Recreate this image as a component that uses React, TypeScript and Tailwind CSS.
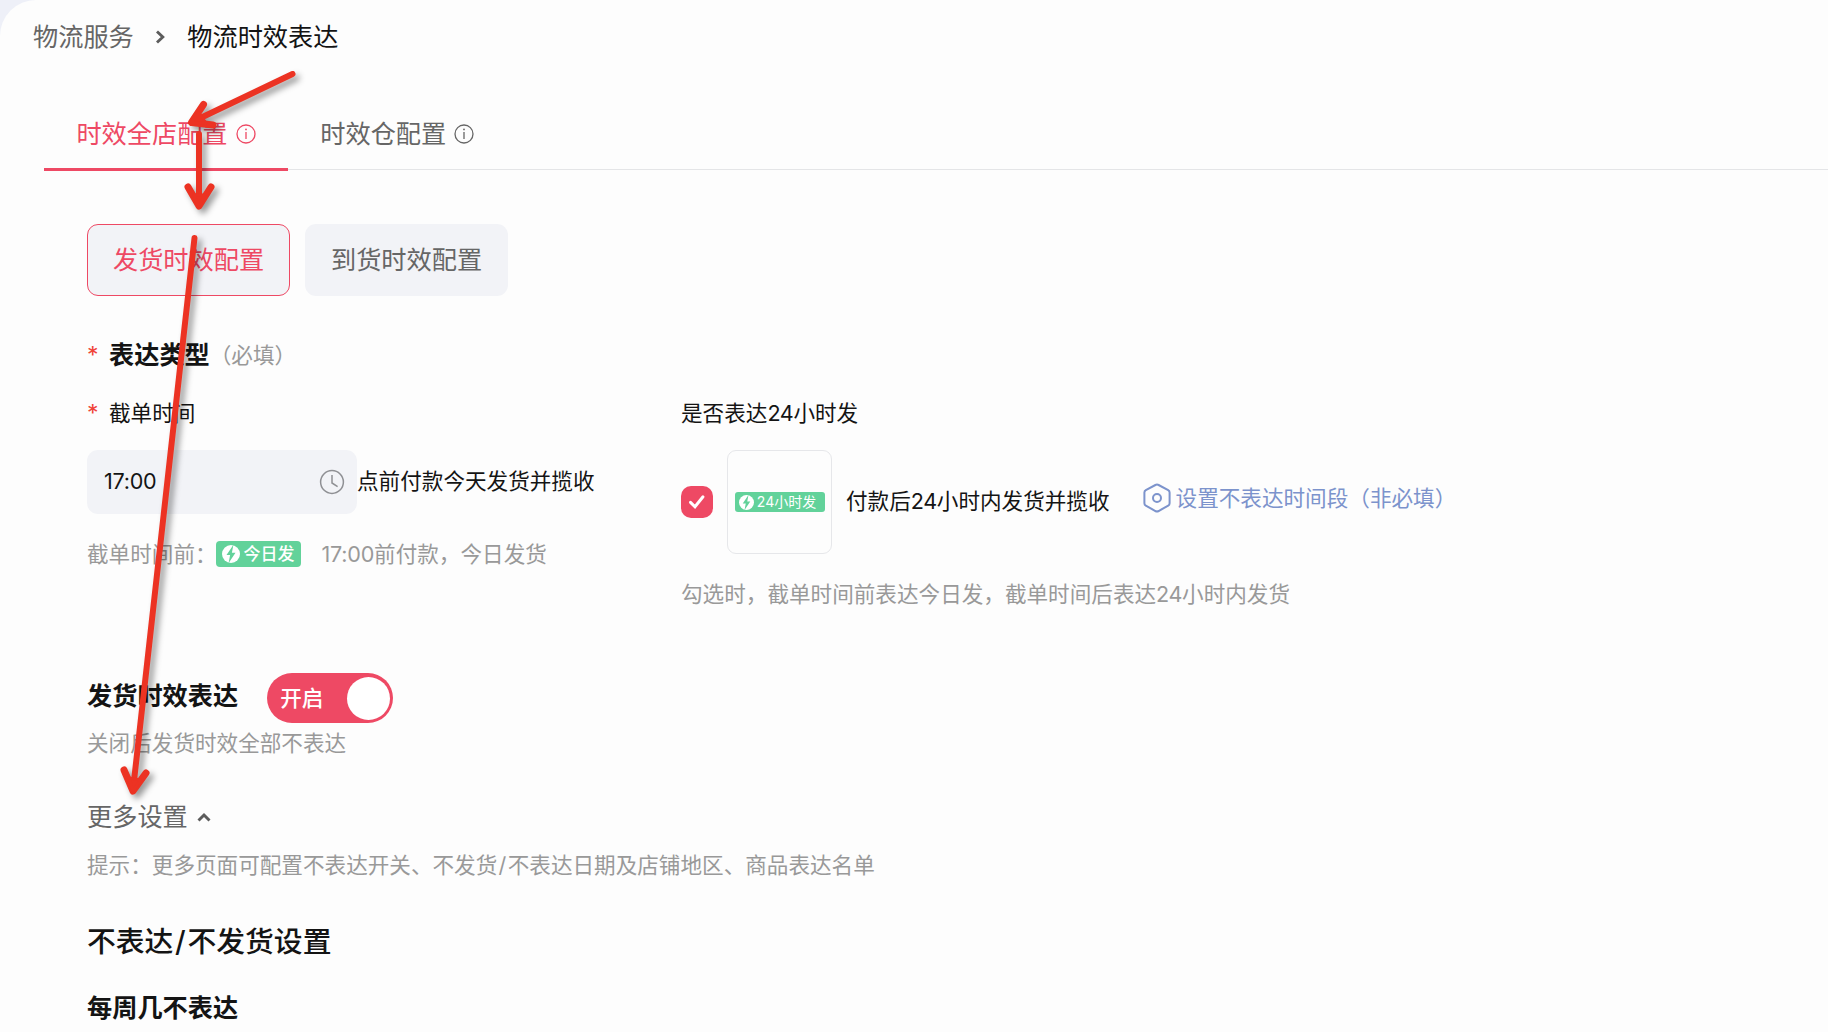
import React from 'react';

const BoltIcon = ({ className }: { className: string }) => (
    <svg viewBox="0 0 20 20" className={className}>
        <circle cx="10" cy="10" r="10" fill="#fff" />
        <path d="M12.6 0 L5 11.2 H9 L7.4 20 L15 8.6 H11 Z" fill="#62d29a" />
    </svg>
);

const InfoIcon = () => (
    <svg viewBox="0 0 20 20" className="w-5 h-5 shrink-0" fill="none" stroke="currentColor" strokeWidth="1.3">
        <circle cx="10" cy="10" r="9" />
        <path d="M10 8 V15" />
        <circle cx="10" cy="5.4" r="0.9" fill="currentColor" stroke="none" />
    </svg>
);

const ClockIcon = () => (
    <svg viewBox="0 0 26 26" className="w-[26px] h-[26px] text-[#8f9094]" fill="none" stroke="currentColor" strokeWidth="1.5">
        <circle cx="13" cy="13" r="11.4" />
        <path d="M13 6 V14 L18.6 17.6" />
    </svg>
);

const HexIcon = () => (
    <svg viewBox="0 0 28 30" className="w-7 h-[30px] shrink-0" fill="none" stroke="currentColor" strokeWidth="2">
        <path d="M12.4 2 Q14 1.2 15.6 2 L25.2 7.2 Q26.6 8 26.6 9.6 V20.2 Q26.6 21.8 25.2 22.6 L15.6 28 Q14 28.8 12.4 28 L2.8 22.6 Q1.4 21.8 1.4 20.2 V9.6 Q1.4 8 2.8 7.2 Z" />
        <circle cx="14" cy="15" r="4" />
    </svg>
);

interface TabProps {
    label: string;
    active?: boolean;
}

const Tab = ({ label, active = false }: TabProps) => (
    <div className={`h-[83px] pt-[11px] px-[32.4px] flex items-center gap-2 border-b-[3px] ${active ? 'text-[#ee4964] border-[#ee4964]' : 'text-[#666666] border-transparent'}`}>
        <span>{label}</span>
        <InfoIcon />
    </div>
);

const ModeButton = ({ label, active = false }: TabProps) => (
    <button className={`w-[203px] h-[72px] pb-px rounded-[11px] bg-[#f2f3f7] border ${active ? 'text-[#ee4964] border-[#ee4964]' : 'text-[#666666] border-transparent'}`}>
        {label}
    </button>
);

// Hand drawn pointers laid over the page
const Arrows = () => (
    <svg
        className="absolute left-0 top-0 w-[400px] h-[820px] pointer-events-none drop-shadow-[4px_4px_3px_rgba(0,0,0,0.4)]"
        viewBox="0 0 400 820"
        fill="none"
        stroke="#ec3323"
        strokeWidth="6"
        strokeLinecap="round"
        strokeLinejoin="round"
    >
        <path d="M292.5 74 L192 122" />
        <path d="M199 134 V204" />
        <path d="M194.5 238 L133 790" />
        <g strokeWidth="7">
            <path d="M203.5 104.5 L191.5 122.5 L213 125" />
            <path d="M188 187 L199 206 L211 187" />
            <path d="M124 770 L133 791 L146 773" />
        </g>
        <g fill="#ec3323" strokeWidth="3">
            <path d="M191 122.5 L199 113 L206 123 Z" />
            <path d="M199 206 L193.5 195 H205 Z" />
            <path d="M133 791 L129 778 L140.5 780 Z" />
        </g>
    </svg>
);

const App: React.FC = () => {
    return (
        <div lang="zh-CN" className="relative w-full h-[1032px] overflow-hidden bg-[#eef0f8] font-['Inter','Noto_Sans_CJK_SC',sans-serif] text-[25.2px] leading-9 text-[#141414]">
            <div className="h-full rounded-tl-[36px] bg-[#fdfdfd]">
                <nav className="h-[86px] pl-[33px] pt-[19px] flex items-start">
                    <span className="text-[#666666]">物流服务</span>
                    <svg viewBox="0 0 12 16" className="w-3 h-4 ml-5 mr-[21.5px] mt-2.5" fill="none" stroke="#5c5c5c" strokeWidth="2.9">
                        <path d="M3 2.5 L8.8 8 L3 13.5" />
                    </svg>
                    <span>物流时效表达</span>
                </nav>

                <div className="ml-11 flex h-[85px] pt-0.5 relative">
                    <div className="absolute inset-x-0 bottom-[1px] h-px bg-[#e4e5e7]" />
                    <div className="relative flex">
                        <Tab label="时效全店配置" active />
                        <Tab label="时效仓配置" />
                    </div>
                </div>

                <main className="pl-[87px]">
                    <div className="pt-[53px] flex gap-[15px]">
                        <ModeButton label="发货时效配置" active />
                        <ModeButton label="到货时效配置" />
                    </div>

                    <div className="mt-[41px] flex items-center">
                        <span className="w-[22px] text-[#f04438] text-[23px]">*</span>
                        <span className="font-bold">表达类型</span>
                        <span className="text-[21.6px] text-[#999999]">（必填）</span>
                    </div>

                    <div className="mt-[22px] flex h-[239px] text-[21.6px]">
                        <section className="w-[594px]">
                            <div className="flex">
                                <span className="w-[22px] text-[#f04438] text-[23px]">*</span>
                                <span>截单时间</span>
                            </div>
                            <div className="mt-[19px] flex items-center">
                                <div className="w-[270px] h-16 px-[17px] pr-3 flex items-center justify-between rounded-[11px] bg-[#f2f3f7]">
                                    <span className="-mt-0.5 tracking-[-0.25px]">17:00</span>
                                    <ClockIcon />
                                </div>
                                <span className="-mt-0.5">点前付款今天发货并揽收</span>
                            </div>
                            <div className="mt-[22px] flex items-center text-[#999999]">
                                <span>截单时间前：</span>
                                <span className="-ml-px w-[85px] h-[26px] flex items-center justify-center gap-1 rounded-[4px] bg-[#62d29a] text-[17px] font-medium text-white">
                                    <BoltIcon className="w-[18px] h-[18px]" />
                                    今日发
                                </span>
                                <span className="ml-[21px]"><span className="tracking-[-0.25px]">17:00</span>前付款，今日发货</span>
                            </div>
                        </section>

                        <section>
                            <div>是否表达<span className="tracking-[-0.4px]">24</span>小时发</div>
                            <div className="mt-[19px] flex items-center">
                                <span className="w-8 h-8 flex items-center justify-center rounded-[10px] bg-[#ee4964]">
                                    <svg viewBox="0 0 20 16" className="w-5 h-4" fill="none" stroke="#fff" strokeWidth="3" strokeLinecap="round">
                                        <path d="M3.5 8.4 L8 12.8 L16 2.8" />
                                    </svg>
                                </span>
                                <span className="ml-3.5 w-[105px] h-[104px] flex items-center justify-center rounded-[9px] border border-[#e6e7ea]">
                                    <span className="w-[90px] h-5 pr-1 flex items-center justify-center gap-[3px] rounded-[3px] bg-[#62d29a] text-[14px] text-white">
                                        <BoltIcon className="w-[15px] h-[15px]" />
                                        24小时发
                                    </span>
                                </span>
                                <span className="ml-3.5 -mt-0.5">付款后<span className="tracking-[-0.4px]">24</span>小时内发货并揽收</span>
                                <span className="ml-[33px] -mt-2 flex items-center gap-[5px] text-[#7c93cc]">
                                    <HexIcon />
                                    设置不表达时间段（非必填）
                                </span>
                            </div>
                            <div className="mt-[22px] text-[#999999]">勾选时，截单时间前表达今日发，截单时间后表达<span className="tracking-[-0.4px]">24</span>小时内发货</div>
                        </section>
                    </div>

                    <div className="mt-[39px] flex items-center">
                        <span className="-mt-1 font-bold">发货时效表达</span>
                        <span className="ml-[29px] w-[126px] h-[50px] pl-[13px] pr-[3px] flex items-center justify-between rounded-full bg-[#ee4964] text-[21.6px] font-medium text-white">
                            开启
                            <span className="w-[43px] h-[43px] rounded-full bg-white" />
                        </span>
                    </div>
                    <div className="mt-0.5 text-[21.6px] text-[#999999]">关闭后发货时效全部不表达</div>

                    <div className="mt-[38px] flex items-center text-[#666666]">
                        更多设置
                        <svg viewBox="0 0 16 12" className="w-4 h-3 ml-2" fill="none" stroke="#5c5c5c" strokeWidth="2.9">
                            <path d="M2.5 9.5 L8 4 L13.5 9.5" />
                        </svg>
                    </div>
                    <div className="mt-3 text-[21.6px] text-[#999999]">
                        提示：更多页面可配置不表达开关、不发货<span className="px-[1.3px]">/</span>不表达日期及店铺地区、商品表达名单
                    </div>

                    <h2 className="mt-[41px] text-[28.8px] font-medium">不表达<span className="px-[1.7px]">/</span>不发货设置</h2>
                    <h3 className="mt-[30px] font-bold">每周几不表达</h3>
                </main>
            </div>
            <Arrows />
        </div>
    );
};

export default App;
